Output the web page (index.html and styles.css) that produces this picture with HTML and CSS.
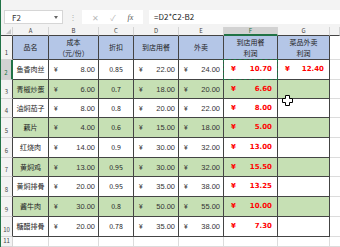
FILE: index.html
```html
<!DOCTYPE html>
<html>
<head>
<meta charset="UTF-8">
<title>菜品利润</title>
<link rel="stylesheet" href="styles.css">
</head>
<body>
<div class="app">
    <div class="ribbon"></div>
    <div class="formula-bar">
        <div class="name-box"><span>F2</span><span class="caret"></span></div>
        <div class="grip">⋮</div>
        <div class="fx-buttons"><span>✕</span><span>✓</span><span class="fx">fx</span></div>
        <div class="formula">=D2*C2-B2</div>
    </div>
    <div class="sheet">
        <div class="row col-heads">
            <div class="ch w-rh corner"></div>
            <div class="ch w-a">A</div>
            <div class="ch w-b">B</div>
            <div class="ch w-c">C</div>
            <div class="ch w-d">D</div>
            <div class="ch w-e">E</div>
            <div class="ch w-f sel">F</div>
            <div class="ch w-g">G</div>
            <div class="ch w-x"></div>
        </div>
        <div class="row head">
            <div class="rh w-rh">1</div>
            <div class="cell w-a">品名</div>
            <div class="cell w-b">成本<br>（元/份）</div>
            <div class="cell w-c">折扣</div>
            <div class="cell w-d">到店用餐</div>
            <div class="cell w-e">外卖</div>
            <div class="cell w-f">到店用餐<br>利润</div>
            <div class="cell w-g">菜品外卖<br>利润</div>
            <div class="blank w-x"></div>
        </div>
        <div class="row">
            <div class="rh w-rh sel">2</div>
            <div class="cell w-a">鱼香肉丝</div>
            <div class="cell w-b money"><span>¥</span><span>8.00</span></div>
            <div class="cell w-c">0.85</div>
            <div class="cell w-d money"><span>¥</span><span>22.00</span></div>
            <div class="cell w-e money"><span>¥</span><span>24.00</span></div>
            <div class="cell w-f money profit active"><span>¥</span><span>10.70</span><div class="marquee"></div></div>
            <div class="cell w-g money profit"><span>¥</span><span>12.40</span></div>
            <div class="blank w-x"></div>
        </div>
        <div class="row green h19">
            <div class="rh w-rh">3</div>
            <div class="cell w-a">青椒炒蛋</div>
            <div class="cell w-b money"><span>¥</span><span>6.00</span></div>
            <div class="cell w-c">0.7</div>
            <div class="cell w-d money"><span>¥</span><span>18.00</span></div>
            <div class="cell w-e money"><span>¥</span><span>20.00</span></div>
            <div class="cell w-f money profit"><span>¥</span><span>6.60</span></div>
            <div class="cell w-g"></div>
            <div class="blank w-x"></div>
        </div>
        <div class="row h19">
            <div class="rh w-rh">4</div>
            <div class="cell w-a">油焖茄子</div>
            <div class="cell w-b money"><span>¥</span><span>8.00</span></div>
            <div class="cell w-c">0.8</div>
            <div class="cell w-d money"><span>¥</span><span>20.00</span></div>
            <div class="cell w-e money"><span>¥</span><span>22.00</span></div>
            <div class="cell w-f money profit"><span>¥</span><span>8.00</span></div>
            <div class="cell w-g"></div>
            <div class="blank w-x"></div>
        </div>
        <div class="row green">
            <div class="rh w-rh">5</div>
            <div class="cell w-a">藕片</div>
            <div class="cell w-b money"><span>¥</span><span>4.00</span></div>
            <div class="cell w-c">0.6</div>
            <div class="cell w-d money"><span>¥</span><span>15.00</span></div>
            <div class="cell w-e money"><span>¥</span><span>18.00</span></div>
            <div class="cell w-f money profit"><span>¥</span><span>5.00</span></div>
            <div class="cell w-g"></div>
            <div class="blank w-x"></div>
        </div>
        <div class="row">
            <div class="rh w-rh">6</div>
            <div class="cell w-a">红烧肉</div>
            <div class="cell w-b money"><span>¥</span><span>14.00</span></div>
            <div class="cell w-c">0.9</div>
            <div class="cell w-d money"><span>¥</span><span>30.00</span></div>
            <div class="cell w-e money"><span>¥</span><span>32.00</span></div>
            <div class="cell w-f money profit"><span>¥</span><span>13.00</span></div>
            <div class="cell w-g"></div>
            <div class="blank w-x"></div>
        </div>
        <div class="row green h19">
            <div class="rh w-rh">7</div>
            <div class="cell w-a">黄焖鸡</div>
            <div class="cell w-b money"><span>¥</span><span>13.00</span></div>
            <div class="cell w-c">0.95</div>
            <div class="cell w-d money"><span>¥</span><span>30.00</span></div>
            <div class="cell w-e money"><span>¥</span><span>32.00</span></div>
            <div class="cell w-f money profit"><span>¥</span><span>15.50</span></div>
            <div class="cell w-g"></div>
            <div class="blank w-x"></div>
        </div>
        <div class="row">
            <div class="rh w-rh">8</div>
            <div class="cell w-a">黄焖排骨</div>
            <div class="cell w-b money"><span>¥</span><span>20.00</span></div>
            <div class="cell w-c">0.95</div>
            <div class="cell w-d money"><span>¥</span><span>35.00</span></div>
            <div class="cell w-e money"><span>¥</span><span>38.00</span></div>
            <div class="cell w-f money profit"><span>¥</span><span>13.25</span></div>
            <div class="cell w-g"></div>
            <div class="blank w-x"></div>
        </div>
        <div class="row green">
            <div class="rh w-rh">9</div>
            <div class="cell w-a">酱牛肉</div>
            <div class="cell w-b money"><span>¥</span><span>30.00</span></div>
            <div class="cell w-c">0.8</div>
            <div class="cell w-d money"><span>¥</span><span>50.00</span></div>
            <div class="cell w-e money"><span>¥</span><span>55.00</span></div>
            <div class="cell w-f money profit"><span>¥</span><span>10.00</span></div>
            <div class="cell w-g"></div>
            <div class="blank w-x"></div>
        </div>
        <div class="row">
            <div class="rh w-rh">10</div>
            <div class="cell w-a">糖醋排骨</div>
            <div class="cell w-b money"><span>¥</span><span>20.00</span></div>
            <div class="cell w-c">0.78</div>
            <div class="cell w-d money"><span>¥</span><span>35.00</span></div>
            <div class="cell w-e money"><span>¥</span><span>38.00</span></div>
            <div class="cell w-f money profit"><span>¥</span><span>7.30</span></div>
            <div class="cell w-g"></div>
            <div class="blank w-x"></div>
        </div>
        <div class="row last">
            <div class="rh w-rh">11</div>
            <div class="blank w-a"></div>
            <div class="blank w-b"></div>
            <div class="blank w-c"></div>
            <div class="blank w-d"></div>
            <div class="blank w-e"></div>
            <div class="blank w-f"></div>
            <div class="blank w-g"></div>
            <div class="blank w-x"></div>
        </div>
    </div>
    <svg class="cursor" width="11" height="11" viewBox="0 0 11 11">
        <path d="M3.5 0.5h4v3h3v4h-3v3h-4v-3h-3v-4h3z" fill="#fff" stroke="#000" stroke-width="1"/>
    </svg>
</div>
</body>
</html>
```

FILE: styles.css
```css
* { padding: 0; margin: 0; box-sizing: border-box; }
html, body {
    width: 100%;
    height: 100%;
}
body {
    overflow: hidden;
    background: #fff;
    font-family: "Noto Sans CJK SC", sans-serif;
    color: #222;
}
.app {
    position: relative;
    height: 100%;
    border-left: 1px solid #217346;
    display: flex;
    flex-direction: column;
}
.ribbon {
    height: 9px;
    background: #f3f3f3;
}

/* formula bar */
.formula-bar {
    height: 20px;
    padding-top: 2px;
    display: flex;
    align-items: flex-start;
    background: #f3f3f3;
}
.name-box {
    width: 59px;
    height: 14px;
    margin-left: 3px;
    padding: 0 4px 0 7px;
    display: flex;
    align-items: center;
    justify-content: space-between;
    background: #fff;
    border: 1px solid #d6d6d6;
    font-size: 8px;
    color: #333;
}
.caret {
    border-left: 2px solid transparent;
    border-right: 2px solid transparent;
    border-top: 3px solid #666;
}
.grip {
    width: 19px;
    line-height: 14px;
    text-align: center;
    font-size: 8px;
    color: #b0b0b0;
}
.fx-buttons {
    width: 61px;
    height: 14px;
    padding: 0 4px;
    display: flex;
    align-items: center;
    justify-content: space-around;
    background: #fff;
    font-size: 8px;
    color: #b8b8b8;
}
.fx-buttons .fx {
    font-family: "Liberation Serif", serif;
    font-style: italic;
    color: #555;
}
.formula {
    flex: 1;
    height: 14px;
    margin-left: 6px;
    padding-left: 5px;
    line-height: 14px;
    background: #fff;
    font-size: 8px;
    color: #222;
}

/* sheet */
.sheet {
    flex: 1;
}
.row {
    display: flex;
    height: 20px;
}
.row.h19 { height: 19px; }
.row.head { height: 24px; }
.row.last { height: 10px; }
.row.col-heads { height: 9px; }

.w-rh { width: 12px; }
.w-a { width: 36px; }
.w-b { width: 50px; }
.w-c { width: 35px; }
.w-d { width: 45px; }
.w-e { width: 45px; }
.w-f { width: 54px; }
.w-g { width: 52px; }
.w-x { flex: 1; }

.ch {
    display: flex;
    align-items: center;
    justify-content: center;
    background: #f3f3f3;
    border-right: 1px solid #d4d4d4;
    border-bottom: 1px solid #444;
    font-size: 6px;
    line-height: 8px;
    color: #444;
}
.ch.sel {
    background: #d2d2d2;
    border-bottom: 2px solid #217346;
    color: #217346;
}
.ch.corner {
    position: relative;
}
.ch.corner:after {
    content: "";
    position: absolute;
    right: 1px;
    bottom: 1px;
    border-left: 5px solid transparent;
    border-bottom: 5px solid #c8c8c8;
}
.rh {
    display: flex;
    align-items: flex-end;
    justify-content: center;
    padding-bottom: 2px;
    background: #f3f3f3;
    border-right: 1px solid #444;
    border-bottom: 1px solid #d4d4d4;
    font-size: 6px;
    line-height: 8px;
    color: #444;
}
.rh.sel {
    background: #d2d2d2;
    border-right: 2px solid #217346;
    color: #217346;
}
.row.last .rh {
    border-right-color: #d4d4d4;
    padding-bottom: 0;
    align-items: flex-start;
}

.cell {
    display: flex;
    align-items: center;
    justify-content: center;
    border-right: 1px solid #444;
    border-bottom: 1px solid #444;
    font-size: 7px;
    line-height: 11px;
    text-align: center;
    white-space: nowrap;
}
.blank {
    border-right: 1px solid #dcdcdc;
    border-bottom: 1px solid #dcdcdc;
}
.w-x.blank { border-right: none; }
.head .cell { background: #b4c6e7; }
.green .cell { background: #c6e0b4; }

.money {
    justify-content: space-between;
    padding: 0 3px 0 5px;
    font-family: "Liberation Sans", sans-serif;
    font-size: 7.5px;
    color: #333;
}
.money span:first-child {
    font-size: 6.5px;
}
.profit {
    padding: 0 5px 0 7px;
    font-family: "DejaVu Sans", sans-serif;
    font-weight: bold;
    font-size: 7px;
    color: #f00;
}
.profit span:first-child {
    font-size: 7px;
}
.active {
    position: relative;
}
.marquee {
    position: absolute;
    top: -1px;
    left: -1px;
    right: -1px;
    bottom: -1px;
    border: 1.5px dashed #217346;
}
.cursor {
    position: absolute;
    left: 281px;
    top: 95px;
}
```
